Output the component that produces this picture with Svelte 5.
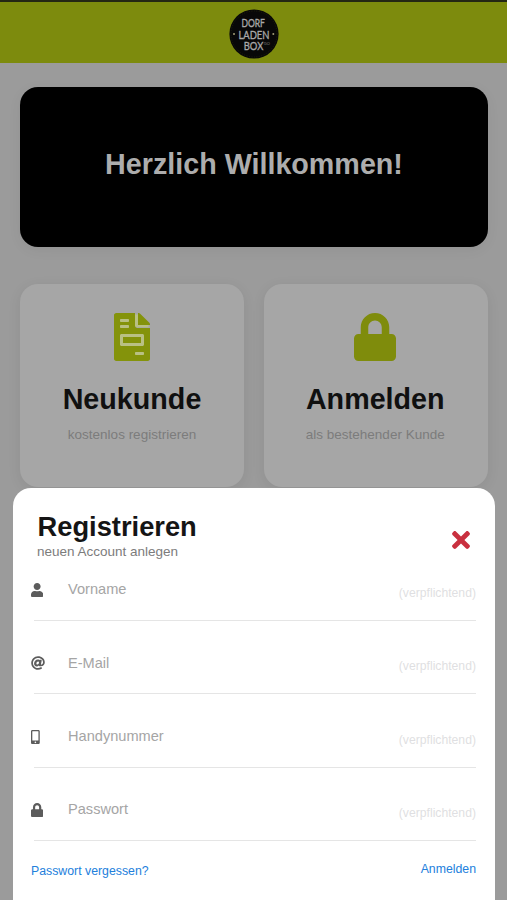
<script>
  const icons = {
    user: { w: 448, d: 'M224 256c70.7 0 128-57.3 128-128S294.7 0 224 0 96 57.3 96 128s57.3 128 128 128zm89.600 32h-16.700c-22.200 10.200-46.900 16-72.900 16s-50.600-5.800-72.900-16h-16.700C60.200 288 0 348.200 0 422.400V464c0 26.500 21.500 48 48 48h352c26.500 0 48-21.500 48-48v-41.600c0-74.200-60.200-134.400-134.400-134.400z' },
    at: { w: 512, d: 'M256 8C118.941 8 8 118.919 8 256c0 137.059 110.919 248 248 248 48.154 0 95.342-14.140 135.408-40.223 12.005-7.815 14.625-24.288 5.552-35.372l-10.177-12.433c-7.671-9.371-21.179-11.667-31.373-5.129C325.920 429.757 291.314 440 256 440c-101.458 0-184-82.542-184-184S154.542 72 256 72c100.139 0 184 57.619 184 160 0 38.786-21.093 79.742-58.170 83.693-17.349-.454-16.910-12.857-13.476-30.024l23.433-121.110C394.653 149.750 383.308 136 368.225 136h-44.981a13.518 13.518 0 0 0-13.432 11.993l-.01.092c-14.697-17.901-40.448-21.775-59.971-21.775-74.580 0-137.831 62.234-137.831 151.460 0 65.303 36.785 105.870 96 105.870 26.984 0 57.369-15.637 74.991-38.333 9.522 34.104 40.613 34.104 70.710 34.104C462.609 379.410 504 307.798 504 232 504 95.653 394.023 8 256 8zm-21.680 304.430c-22.249 0-36.070-15.623-36.070-40.771 0-44.993 30.779-72.729 58.630-72.729 22.292 0 35.601 15.241 35.601 40.770 0 45.061-33.875 72.730-58.161 72.730z' },
    mobile: { w: 320, d: 'M272 0H48C21.500 0 0 21.500 0 48v416c0 26.500 21.500 48 48 48h224c26.500 0 48-21.500 48-48V48c0-26.500-21.500-48-48-48zM160 480c-17.700 0-32-14.300-32-32s14.300-32 32-32 32 14.300 32 32-14.300 32-32 32zm112-108c0 6.600-5.400 12-12 12H60c-6.600 0-12-5.400-12-12V60c0-6.600 5.400-12 12-12h200c6.600 0 12 5.400 12 12v312z' },
    lock: { w: 448, d: 'M400 224h-24v-72C376 68.200 307.800 0 224 0S72 68.200 72 152v72H48c-26.500 0-48 21.500-48 48v192c0 26.500 21.500 48 48 48h352c26.500 0 48-21.500 48-48V272c0-26.500-21.500-48-48-48zm-104 0H152v-72c0-39.700 32.300-72 72-72s72 32.300 72 72v72z' }
  };

  const fields = [
    { label: 'Vorname', icon: icons.user },
    { label: 'E-Mail', icon: icons.at },
    { label: 'Handynummer', icon: icons.mobile },
    { label: 'Passwort', icon: icons.lock }
  ];
</script>

<div class="screen">
  <header>
    <svg class="logo" width="50" height="50" viewBox="0 0 50 50">
      <circle cx="25" cy="25" r="24.600" fill="#080808" />
      <circle cx="25" cy="25" r="23" fill="none" stroke="#2b2e10" stroke-width=".6" stroke-dasharray="1 1.500" />
      <g fill="#a9a9a9" stroke="#a9a9a9" stroke-width=".35" text-anchor="middle">
        <text x="24.200" y="18" font-size="12" textLength="23.500" lengthAdjust="spacingAndGlyphs">DORF</text>
        <text x="25" y="29.500" font-size="12" textLength="31" lengthAdjust="spacingAndGlyphs">LADEN</text>
        <text x="24.500" y="41" font-size="12" textLength="19.500" lengthAdjust="spacingAndGlyphs">BOX</text>
        <text x="37.800" y="35.500" font-size="4" fill="#777" stroke="none">GO</text>
      </g>
      <circle cx="5" cy="25" r="1" fill="#a39e75" />
      <circle cx="44.300" cy="25" r="1" fill="#a39e75" />
    </svg>
  </header>

  <main>
    <section class="welcome"><h1>Herzlich Willkommen!</h1></section>
    <div class="cards">
      <article class="card">
        <svg width="36" height="48" viewBox="0 0 384 512">
          <path fill="#b9c084" d="M16 16h245l107 107v30H248l-24-10V90h-50v70H50V50h174V16zM50 215h284v140H50zM210 405h124v60H210z" />
          <path fill="#84930b" d="M377 105L279.100 7c-4.500-4.500-10.600-7-17-7H256v128h128v-6.100c0-6.300-2.500-12.400-7-16.900zM224 136V0H24C10.700 0 0 10.700 0 24v464c0 13.300 10.700 24 24 24h336c13.300 0 24-10.700 24-24V160H248c-13.200 0-24-10.800-24-24zM64 72c0-4.420 3.580-8 8-8h80c4.420 0 8 3.580 8 8v16c0 4.420-3.580 8-8 8H72c-4.420 0-8-3.580-8-8V72zm0 64c0-4.420 3.580-8 8-8h80c4.420 0 8 3.580 8 8v16c0 4.420-3.580 8-8 8H72c-4.420 0-8-3.580-8-8v-16zm256 304c0 4.420-3.580 8-8 8h-80c-4.420 0-8-3.580-8-8v-16c0-4.420 3.580-8 8-8h80c4.420 0 8 3.580 8 8v16zm0-200v96c0 8.840-7.160 16-16 16H80c-8.840 0-16-7.160-16-16v-96c0-8.840 7.160-16 16-16h224c8.840 0 16 7.160 16 16zM288 256H96v64h192v-64z" />
        </svg>
        <h2>Neukunde</h2>
        <p>kostenlos registrieren</p>
      </article>
      <article class="card login-card">
        <svg width="42" height="48" viewBox="0 0 448 512"><path fill="#7f8c0c" d={icons.lock.d} /></svg>
        <h2>Anmelden</h2>
        <p>als bestehender Kunde</p>
      </article>
    </div>
  </main>

  <section class="sheet">
    <div class="heading">
      <div>
        <h2>Registrieren</h2>
        <p>neuen Account anlegen</p>
      </div>
      <svg class="close" width="18" height="26" viewBox="0 0 352 512">
        <path fill="#c9303f" d="M242.720 256l100.070-100.070c12.280-12.280 12.280-32.190 0-44.480l-22.240-22.240c-12.280-12.280-32.190-12.280-44.480 0L176 189.280 75.930 89.210c-12.280-12.280-32.190-12.280-44.480 0L9.210 111.450c-12.280 12.280-12.280 32.190 0 44.480L109.280 256 9.210 356.070c-12.280 12.280-12.280 32.190 0 44.480l22.240 22.240c12.280 12.280 32.200 12.280 44.480 0L176 322.720l100.070 100.070c12.280 12.280 32.200 12.280 44.480 0l22.240-22.240c12.280-12.280 12.280-32.190 0-44.480L242.720 256z" />
      </svg>
    </div>
    <div class="fields">
      {#each fields as field}
        <div class="field">
          <span class="icon">
            <svg height="14" width={(14 * field.icon.w) / 512} viewBox="0 0 {field.icon.w} 512"><path fill="#5c5c5c" d={field.icon.d} /></svg>
          </span>
          <span class="label">{field.label}</span>
          <span class="required">(verpflichtend)</span>
        </div>
      {/each}
    </div>
    <footer>
      <span class="forgot">Passwort vergessen?</span>
      <span class="login">Anmelden</span>
    </footer>
  </section>
</div>

<style>
  :global(body) { margin: 0; }
  .screen {
    position: relative;
    width: 507px;
    height: 900px;
    overflow: hidden;
    background: #9b9b9b;
    font-family: "Liberation Sans", Arial, sans-serif;
  }
  h1, h2, p { margin: 0; }
  header {
    box-sizing: border-box;
    height: 63px;
    border-top: 2px solid #242713;
    background: #7d8b0d;
    display: flex;
    justify-content: center;
    padding: 7px 0 0 1px;
  }
  .logo { font-family: Lato, sans-serif; }
  main { padding: 24px 19px 0 20px; }
  .welcome {
    height: 160px;
    border-radius: 18px;
    background: #000;
    display: flex;
    justify-content: center;
    box-shadow: 0 3px 14px rgba(0, 0, 0, .05);
  }
  h1 {
    font-size: 28.700px;
    line-height: 34px;
    padding-top: 60px;
    color: #adadad;
    white-space: nowrap;
  }
  .cards { display: grid; grid-template-columns: 1fr 1fr; gap: 20px; margin-top: 37px; }
  .card {
    box-sizing: border-box;
    height: 203px;
    padding-top: 29px;
    border-radius: 18px;
    background: #a6a6a6;
    box-shadow: 0 3px 14px rgba(0, 0, 0, .07);
    display: flex;
    flex-direction: column;
    align-items: center;
  }
  .login-card { padding-right: 1.500px; }
  .card h2 { font-size: 28.700px; line-height: 34px; color: #101010; margin-top: 21px; }
  .card p { font-size: 13.500px; line-height: 16px; color: #7c7c7c; margin-top: 11px; }
  .sheet {
    position: absolute;
    left: 13px;
    right: 12px;
    bottom: 0;
    height: 412px;
    box-sizing: border-box;
    padding: 22px 19px 0 18px;
    border-radius: 18px 18px 0 0;
    background: #fff;
  }
  .heading { display: flex; justify-content: space-between; height: 60px; padding: 0 6px; }
  .heading h2 { font-size: 27.300px; line-height: 33px; color: #151515; padding-left: .5px; }
  .heading p { font-size: 13.500px; line-height: 16px; color: #7c7c7c; margin-top: 1px; }
  .close { margin-top: 17px; }
  .field {
    height: 73.300px;
    display: flex;
    align-items: flex-start;
    position: relative;
    box-sizing: border-box;
  }
  .fields { padding-top: 1px; }
  .field::after {
    content: "";
    position: absolute;
    left: 3px;
    right: 0;
    top: 49px;
    height: 1px;
    background: #e5e5e5;
  }
  .icon { width: 37px; height: 14px; padding-top: 12.200px; }
  .icon svg { display: block; }
  .label { flex: 1; font-size: 14.600px; line-height: 18px; padding-top: 9.300px; color: #a5a5a5; }
  .required { font-size: 12.200px; line-height: 16px; padding-top: 14px; color: #dfdfe2; }
  footer { display: flex; justify-content: space-between; font-size: 12.300px; line-height: 16px; color: #2280dc; }
  .forgot { margin-top: -1px; }
  .login { margin-top: -3px; }
</style>
